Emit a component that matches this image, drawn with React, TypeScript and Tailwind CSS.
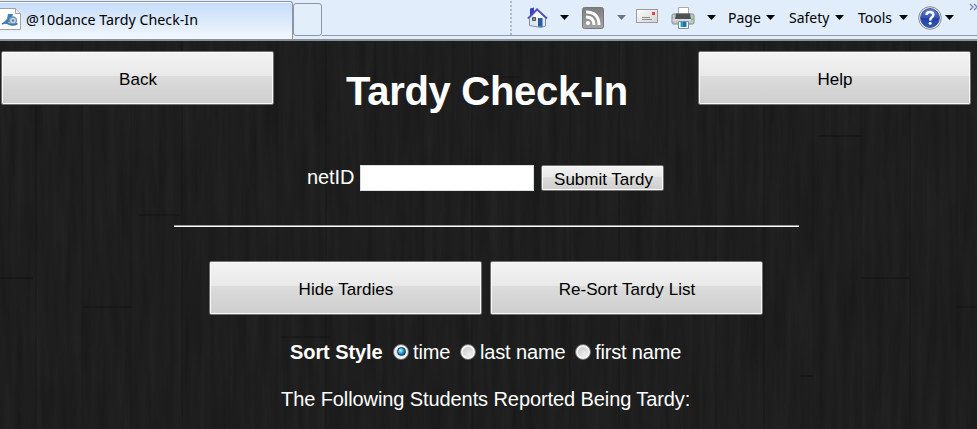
import React from "react";

const sans = "font-['Liberation_Sans',Arial,sans-serif]";
const ui = "font-['Noto_Sans','Open_Sans',sans-serif]";

function Caret({ className = "", color = "#000" }: { className?: string; color?: string }) {
  return (
    <svg className={`h-[5px] w-[9px] shrink-0 ${className}`} viewBox="0 0 9 5">
      <path d="M0 0H9L4.5 5Z" fill={color} />
    </svg>
  );
}

function PageIcon() {
  return (
    <svg className="-ml-px h-[24px] w-[22px] shrink-0" viewBox="0 0 22 24">
      <path d="M-1 1.5H16.5L21.5 6.5V22.5H-1Z" fill="#fff" stroke="#a2a2a2" />
      <path d="M16.5 1.5V6.5H21.5" fill="#eee" stroke="#a2a2a2" />
      <path d="M4 16L8 12L9 7L14 7L13 11L9 16Z" fill="#3c83b9" />
      <circle cx="14" cy="13.5" r="3.5" fill="#c9dae8" stroke="#6f93b0" strokeWidth="1.4" />
      <circle cx="14" cy="13.5" r="1.3" fill="#5b7f9d" />
      <path d="M3 17Q7 15 10 17Q14 19 18.500 16.500" fill="none" stroke="#337ab0" strokeWidth="1.7" />
    </svg>
  );
}

function HomeIcon() {
  return (
    <svg className="h-[22px] w-[21px] shrink-0" viewBox="0 0 21 22">
      <path d="M3 1.500L7 .5V7L3 10Z" fill="#3b40c2" />
      <path d="M2.5 11L10.5 3L18.5 11V19L14 20.500L2.5 18.500Z" fill="#e3e8ef" stroke="#8190a6" />
      <path d="M10.500 4L17 11H4.500Z" fill="#f7f9fc" />
      <path d="M.8 11.500L10 2.300L20 11.500" fill="none" stroke="#4a4fc4" strokeWidth="1.700" />
      <path d="M11 11H15.500V20L11 19.500Z" fill="#255fa3" />
      <path d="M5.5 10.500H8.500V13.500H5.500Z" fill="#8d939b" stroke="#4d535b" />
    </svg>
  );
}

function FeedIcon() {
  return (
    <svg className="h-[22px] w-[22px] shrink-0" viewBox="0 0 22 22">
      <defs><linearGradient id="feed" x2="0" y2="1"><stop stopColor="#7d7d7d" /><stop offset="1" stopColor="#a5a5a5" /></linearGradient></defs>
      <rect x=".5" y=".5" width="21" height="21" rx="2" fill="url(#feed)" stroke="#777" />
      <circle cx="6" cy="16" r="2.100" fill="#fff" />
      <path d="M4 10Q12 10 12 18M4 5Q17 5 17 18" fill="none" stroke="#fff" strokeWidth="2.8" />
    </svg>
  );
}

function MailIcon() {
  return (
    <svg className="h-[15px] w-[22px] shrink-0" viewBox="0 0 22 15">
      <defs><linearGradient id="mail" x2="1" y2="1"><stop stopColor="#fff" /><stop offset="1" stopColor="#d1d1d1" /></linearGradient></defs>
      <rect x=".5" y=".5" width="21" height="13" fill="url(#mail)" stroke="#9b9b9b" />
      <path d="M16 3H19V6H16Z" fill="#ec4549" /><path d="M6 8.5H14M6 10.5H16" stroke="#8d8d8d" />
    </svg>
  );
}

function PrinterIcon() {
  return (
    <svg className="h-[24px] w-[24px] shrink-0" viewBox="0 0 24 24">
      <path d="M7.5 9V1.5H17.500V9" fill="#fff" stroke="#aaa" />
      <rect x="1" y="8" width="22" height="10" rx="1.5" fill="#c3c5c7" stroke="#85888b" />
      <path d="M5 7.500H19L20 13H4Z" fill="#4d5258" />
      <path d="M1.500 14H22.500" stroke="#eee" /><path d="M20 13.500H22.500" stroke="#61d24b" strokeWidth="2" />
      <path d="M7.5 15.5H17.5V22.5H7.500Z" fill="#fff" stroke="#7591a1" />
      <path d="M9.500 16H12V21H9.500Z" fill="#20a9b3" /><path d="M12 16H15.500V21H12Z" fill="#2472ac" />
    </svg>
  );
}

function HelpIcon() {
  return (
    <svg className="h-[24px] w-[24px] shrink-0" viewBox="0 0 24 24">
      <defs><linearGradient id="help" x2="0" y2="1"><stop stopColor="#6584d2" /><stop offset=".48" stopColor="#3354b4" /><stop offset=".5" stopColor="#1f3fa4" /><stop offset="1" stopColor="#3159bd" /></linearGradient></defs>
      <circle cx="12" cy="12" r="11.3" fill="#eee" stroke="#888" />
      <circle cx="12" cy="12" r="9.4" fill="url(#help)" stroke="#3c529a" />
      <path d="M8.500 9Q8.600 6 12 6Q15.300 6 15.300 8.800Q15.300 10.400 13.500 11.600Q12.200 12.500 12.200 14.500" fill="none" stroke="#fff" strokeWidth="2.500" />
      <circle cx="12.2" cy="17.3" r="1.500" fill="#fff" />
    </svg>
  );
}

function Wood() {
  const seams = [36, 82, 131, 182, 229, 277, 326, 375, 423, 472, 521, 570, 619, 667, 716, 764, 813, 861, 910, 957];
  const joints: [number, number, number][] = [[0, 237, 33], [83, 266, 48], [139, 174, 41], [281, 296, 48], [475, 36, 45], [819, 95, 43], [861, 237, 49], [957, 266, 20], [800, 335, 13]];
  return (
    <svg className="absolute inset-0 h-full w-full" aria-hidden="true">
      <defs>
        <filter id="grain" x="0" y="0" width="100%" height="100%" colorInterpolationFilters="sRGB">
          <feTurbulence type="fractalNoise" baseFrequency=".12 .009" numOctaves="3" seed="12" />
          <feColorMatrix values=".046 0 0 0 .095 .046 0 0 0 .095 .046 0 0 0 .095 0 0 0 0 1" />
        </filter>
      </defs>
      <rect width="100%" height="100%" filter="url(#grain)" />
      {seams.map((x, i) => <path key={x} d={`M${x} 0V389`} stroke="#151515" strokeWidth={i % 3 ? 1 : 2} opacity=".35" />)}
      {joints.map(([x, y, w]) => <path key={`${x}-${y}`} d={`M${x} ${y}h${w}`} fill="none" stroke="#111" strokeWidth="2" opacity=".5" />)}
    </svg>
  );
}

const face = "rounded-[2px] border border-[#707070] bg-[linear-gradient(#f3f3f3_0%,#e9e9e9_46%,#dcdcdc_47%,#cecece_100%)] text-[17px] leading-[20px] text-black shadow-[inset_0_0_0_1px_#fafafa]";

function BigButton({ children }: { children: React.ReactNode }) {
  return <button className={`h-[54px] w-[273px] shrink-0 pl-px pt-[3px] tracking-[0.05px] ${face}`}>{children}</button>;
}

function Radio({ label, on = false, className = "" }: { label: string; on?: boolean; className?: string }) {
  return (
    <label className={`flex items-center whitespace-nowrap tracking-[-0.15px] ${className}`}>
      <span className="mr-[4px] mb-px flex size-[16px] items-center justify-center rounded-full border border-[#777] bg-[radial-gradient(circle_at_60%_65%,#eeeeee,#b5b8c0)] shadow-[inset_0_0_0_2px_#f5f5f5]">
        {on && <span className="size-[9px] rounded-full border border-[#153d5d] bg-[radial-gradient(circle_at_35%_35%,#c4f3ff,#20a5dc_45%,#094779_80%)]" />}
      </span>
      {label}
    </label>
  );
}

export default function App() {
  return (
    <div className={`flex h-[429px] w-[977px] flex-col overflow-hidden bg-[#1e1e1e] ${sans}`}>
      <header className={`flex h-[41px] shrink-0 flex-col bg-[#e1edfa] text-[14px] text-black ${ui}`}>
        <div className="flex h-[36px]">
          <div className="mt-px flex h-[38px] w-[293px] shrink-0 items-start rounded-tr-[3px] border-t border-r border-[#8c95a5] bg-[linear-gradient(#c5dcfa,#f2f7fd)] pt-[5px] shadow-[inset_0_1px_0_#f2f8ff]">
            <PageIcon />
            <span className="ml-[5px] mt-[3px] w-[172px] whitespace-nowrap leading-[20px]"><svg className="h-[20px] w-[174px] overflow-visible"><text x="0" y="15" textLength="172" lengthAdjust="spacingAndGlyphs">@10dance Tardy Check-In</text></svg></span>
          </div>
          <div className="mt-[3px] h-[33px] w-[29px] shrink-0 rounded-[3px] border border-[#8c95a5] bg-[#e3eefb]" />
          <div className="flex h-[36px] flex-1 items-center border-b border-[#8d99ae]">
            <div className="ml-[188px] h-[34px] border-l-2 border-dotted border-[#b1bac6]" />
            <div className="ml-[15px]"><HomeIcon /></div><Caret className="ml-[12px]" />
            <div className="ml-[13px]"><FeedIcon /></div><Caret className="ml-[13px]" color="#70757c" />
            <div className="ml-[10px] mb-[3px]"><MailIcon /></div>
            <div className="ml-[13px]"><PrinterIcon /></div><Caret className="ml-[12px]" />
            <span className="ml-[12px] w-[34px]">Page</span><Caret className="ml-[4px]" />
            <span className="ml-[14px] w-[41px]">Safety</span><Caret className="ml-[5px]" />
            <span className="ml-[14px] w-[36px]">Tools</span><Caret className="ml-[5px]" />
            <div className="ml-[10px]"><HelpIcon /></div><Caret className="ml-[3px]" />
            <svg className="mb-[22px] ml-[15px] h-[8px] w-[9px] shrink-0" viewBox="0 0 9 8"><path d="M1 1L4 4L1 7M5 1L8 4L5 7" fill="none" stroke="#777fba" strokeWidth="1.3" /></svg>
          </div>
        </div>
        <div className="h-[5px] border-b-2 border-[#8e9194]" />
      </header>
      <main className="relative min-h-0 flex-1 overflow-hidden text-white">
        <Wood />
        <div className="relative flex h-full flex-col">
          <div className="flex h-[64px] items-start justify-between pr-[6px] pl-px pt-[10px]">
            <BigButton>Back</BigButton>
            <h1 className="ml-[2px] mt-[17px] whitespace-nowrap text-[40px] font-bold leading-[46px] tracking-[-0.3px]">Tardy Check-In</h1>
            <BigButton>Help</BigButton>
          </div>
          <div className="ml-[307px] mt-[60px] flex h-[26px] text-[20px]">
            <label className="w-[53px] leading-[24px] tracking-[-0.1px]">netID</label>
            <input className="h-[26px] w-[174px] border border-[#d9dfe6] bg-white text-black" />
            <button className={`ml-[7px] h-[26px] w-[123px] whitespace-nowrap pl-[2px] pt-[3px] ${face}`}>Submit Tardy</button>
          </div>
          <hr className="ml-[174px] mt-[34px] h-[2px] w-[625px] border-0 border-t border-[#999] bg-white" />
          <div className="ml-[209px] mt-[34px] flex gap-[8px]"><BigButton>Hide Tardies</BigButton><BigButton>Re-Sort Tardy List</BigButton></div>
          <div className="ml-[290px] mt-[25px] flex h-[24px] items-center text-[20px]">
            <b className="w-[103px] tracking-[-0.08px]">Sort Style</b>
            <Radio label="time" on className="w-[67px]" /><Radio label="last name" className="w-[115px]" /><Radio label="first name" />
          </div>
          <p className="ml-[281px] mt-[23px] whitespace-nowrap text-[20px] leading-[24px] tracking-[-0.09px]">The Following Students Reported Being Tardy:</p>
        </div>
      </main>
    </div>
  );
}
